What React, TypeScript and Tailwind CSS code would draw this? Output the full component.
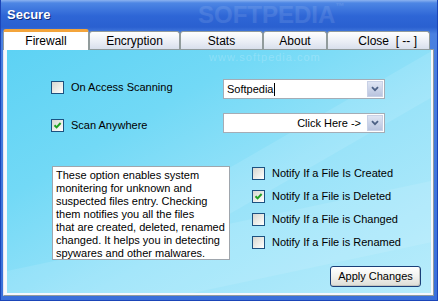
import React from "react";

const Check = ({ checked }: { checked?: boolean }) => (
  <div className="w-[13px] h-[13px] shrink-0 border border-[#1c5180] bg-[linear-gradient(135deg,#d6d6d0_0%,#ebebe6_50%,#ffffff_100%)] flex items-center justify-center">
    {checked && (
      <svg width="9" height="9" viewBox="0 0 9 9">
        <path d="M1.5 4.2 L3.6 6.4 L7.6 2" stroke="#21a121" strokeWidth="2" fill="none" />
      </svg>
    )}
  </div>
);

const CheckRow = ({ checked, label }: { checked?: boolean; label: string }) => (
  <div className="flex items-center h-[13px] gap-[7px] whitespace-nowrap">
    <Check checked={checked} />
    <span className="text-[11px] leading-[13px] text-black">{label}</span>
  </div>
);

const Combo = ({ children, right }: { children: React.ReactNode; right?: boolean }) => (
  <div className="w-[162px] h-[20px] border border-[#a5acb5] bg-white flex p-px">
    <div
      className={
        right
          ? "flex-1 flex items-center justify-end pr-[6px] text-[11px] text-black whitespace-nowrap"
          : "flex-1 flex items-center pl-[2px] text-[11px] text-black whitespace-nowrap"
      }
    >
      {children}
    </div>
    <div className="w-[16px] border border-[#c9d1e6] bg-[linear-gradient(to_bottom,#dfe5f3,#b9c4de)] flex items-center justify-center">
      <svg width="8" height="6" viewBox="0 0 8 6">
        <path d="M1 1.2 L4 4.2 L7 1.2" stroke="#4d6185" strokeWidth="1.8" fill="none" />
      </svg>
    </div>
  </div>
);

const Tab = ({ label, w, active, close }: { label: string; w: string; active?: boolean; close?: boolean }) => {
  if (active) {
    return (
      <div
        className={`${w} h-[21px] -mb-px bg-white border-x border-[#919b9c] rounded-t-[3px] border-t-[3px] border-t-[#f3a43b] flex items-center justify-center text-[12px] text-black`}
      >
        {label}
      </div>
    );
  }
  return (
    <div
      className={`${w} h-[18px] bg-[linear-gradient(to_bottom,#ffffff,#e9edf5_60%,#d8dfec)] border border-b-0 border-[#919b9c] rounded-t-[3px] flex items-center text-[12px] text-black whitespace-pre ${
        close ? "justify-end pr-[12px]" : "justify-center"
      }`}
    >
      {label}
    </div>
  );
};

export default function App() {
  return (
    <div className="relative w-[438px] h-[301px] overflow-hidden flex flex-col font-['Liberation_Sans',Arial,sans-serif] bg-[linear-gradient(to_bottom,#8cb3f0_0px,#4d86e4_3px,#2e66d6_16px,#2a60d0_27px,#4a80e0_34px,#3f76dc_60%,#3a70da_100%)] shadow-[inset_1px_0_0_#1b45b8,inset_-1px_0_0_#1b45b8,inset_0_-1px_0_#1b45b8]">
      {/* watermark */}
      <div className="absolute left-[198px] top-[2px] text-[24px] leading-[26px] font-bold text-white/10 pointer-events-none whitespace-nowrap">
        SOFTPEDIA<span className="text-[9px] align-top leading-[9px]">™</span>
      </div>

      <div className="h-[29px] flex items-center pl-[7px] text-white font-bold text-[13px] [text-shadow:1px_1px_0_#0d2c80]">
        Secure
      </div>

      <div className="flex-1 flex flex-col pl-[3px] pr-[4px] pb-[5px]">
        <div className="relative z-10 flex items-end h-[20px]">
          <Tab label="Firewall" w="w-[86px]" active />
          <Tab label="Encryption" w="w-[91px]" />
          <Tab label="Stats" w="w-[83px]" />
          <Tab label="About" w="w-[64px]" />
          <Tab label={"Close  [ -- ]"} w="w-[103px]" close />
        </div>

        <div className="flex-1 flex border border-[#919b9c] border-l-[#e4e6ee] bg-[#f7f8fc] pl-[3px] pr-[2px] pb-[2px]">
          <div className="relative flex-1 flex flex-col bg-[linear-gradient(150deg,#5dd2f4_0%,#72d9f6_30%,#9ae3f9_60%,#b8ecfb_100%)] overflow-hidden">
            <div className="absolute left-[-40px] top-[175px] w-[520px] h-[60px] rotate-[-12deg] bg-white/10 pointer-events-none" />
            <div className="absolute left-[180px] top-[30px] w-[400px] h-[40px] rotate-[-30deg] bg-white/10 pointer-events-none" />
            <div className="absolute left-[202px] top-[1px] text-[11px] leading-[12px] tracking-[1px] text-white/20 pointer-events-none">
              www.softpedia.com
            </div>

            {/* top section */}
            <div className="relative flex pt-[29px]">
              <div className="w-[216px] pl-[44px] pt-[2px] flex flex-col gap-[25px]">
                <CheckRow label="On Access Scanning" />
                <CheckRow label="Scan Anywhere" checked />
              </div>
              <div className="flex flex-col gap-[14px]">
                <Combo>
                  <span>Softpedia</span>
                  <span className="inline-block w-px h-[13px] bg-black ml-px" />
                </Combo>
                <Combo right>Click Here -&gt;</Combo>
              </div>
            </div>

            {/* bottom section */}
            <div className="relative flex mt-[33px]">
              <div className="ml-[45px] w-[178px] h-[94px] bg-white border border-[#9fa6ad] pl-[3px] pt-[2px] text-[11px] leading-[13px] text-black whitespace-nowrap">
                These option enables system
                <br />
                monitering for unknown and
                <br />
                suspected files entry. Checking
                <br />
                them notifies you all the files
                <br />
                that are created, deleted, renamed
                <br />
                changed. It helps you in detecting
                <br />
                spywares and other malwares.
              </div>
              <div className="ml-[22px] pt-px flex flex-col">
                <div className="flex flex-col gap-[10px]">
                  <CheckRow label="Notify If a File Is Created" />
                  <CheckRow label="Notify If a File is Deleted" checked />
                  <CheckRow label="Notify If a File is Changed" />
                  <CheckRow label="Notify If a File is Renamed" />
                </div>
                <div className="mt-[17px] ml-[78px] w-[91px] h-[21px] rounded-[3px] border border-[#1a3f78] bg-[linear-gradient(to_bottom,#ffffff,#f2f2ee_50%,#dcdcd6)] shadow-[inset_-1px_-1px_0_#c5c5bf] flex items-center justify-center text-[11px] text-black whitespace-nowrap">
                  Apply Changes
                </div>
              </div>
            </div>
          </div>
        </div>
      </div>
    </div>
  );
}
